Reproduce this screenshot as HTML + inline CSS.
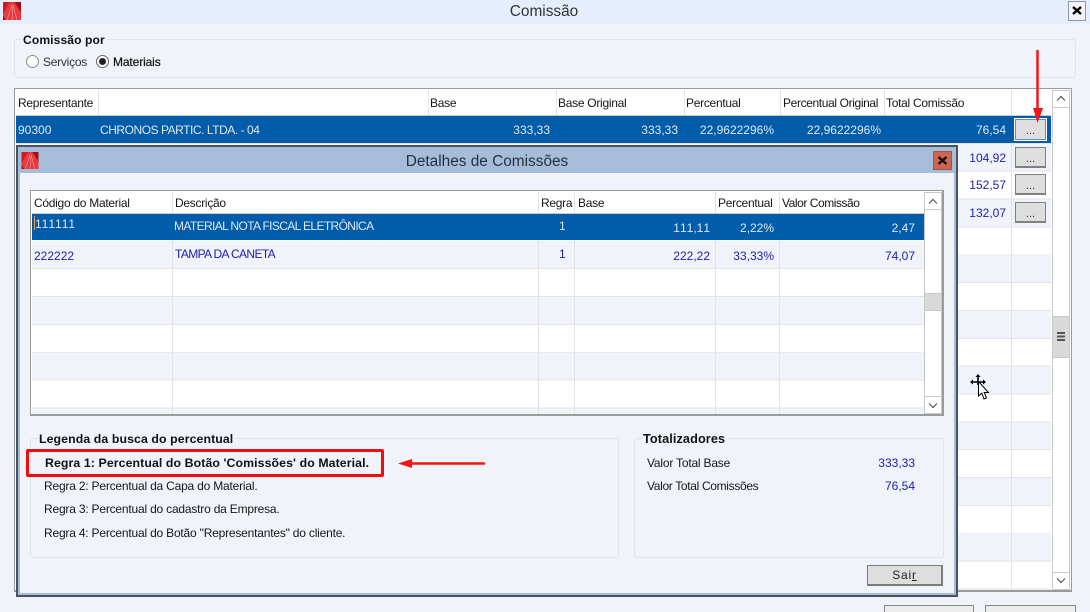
<!DOCTYPE html>
<html><head><meta charset="utf-8"><title>Comissão</title>
<style>
html,body{margin:0;padding:0;width:1090px;height:612px;overflow:hidden;background:#f1f3fa}
body{position:relative;font:12px/14px "Liberation Sans",sans-serif;letter-spacing:-.28px;color:#161616}
div,span{position:absolute;box-sizing:border-box;white-space:nowrap}
.r{text-align:right}
.n{font-size:12px;font-kerning:none;letter-spacing:0}
.c{letter-spacing:-.62px}
.v{width:1px;background:#e3e3e6}
.h{height:1px;background:#e3e3e6}
.blue{color:#2020b0}
.w{color:#dfe8f4}
.btn{width:31px;height:21px;background:#dedede;border:1px solid #808080;border-width:1px 1px 2px 1px;text-align:center;line-height:23px;font-size:11px;letter-spacing:0;color:#333}
.sb{background:#fff;border:1px solid #c8c8c8}
.leg{font-weight:bold;font-size:12.3px;color:#111;letter-spacing:.1px}
.l{letter-spacing:-.2px}
</style></head><body>
<div style="left:0;top:0;width:1090px;height:24px;background:#e6eefd"></div>
<svg style="position:absolute;left:3px;top:2px" width="18" height="18" viewBox="0 0 18 18"><rect width="18" height="18" fill="#d01a20"/><path d="M0 18V12L7 0h4l7 11v7z" fill="#e63a40"/><path d="M4 18L9 3M9 18L10 4M14 18L10 3" stroke="#f29a9a" stroke-width=".6" fill="none"/><path d="M0 18V14L3 18zM12 0h6v9z" fill="#9a0f14"/></svg>
<div style="left:0;width:1090px;top:3px;text-align:center;font-size:15.400px;letter-spacing:0;line-height:18px;color:#333;padding-right:2px">Comissão</div>
<div style="left:1068px;top:1px;width:18px;height:20px;background:#f2f4fa;border:1px solid #8d97a8"></div>
<svg style="position:absolute;left:1072px;top:6px" width="10" height="9"><path d="M1 1L9 8M9 1L1 8" stroke="#000" stroke-width="2.400"/></svg>

<div style="left:14px;top:39px;width:1062px;height:39px;border:1px solid #dfe3ea;border-radius:3px"></div>
<div style="left:23px;top:33px;background:#f1f3fa;font-weight:bold;font-size:12.100px;padding:0 2px 0 0;color:#111;letter-spacing:.1px">Comissão por</div>
<div style="left:26px;top:55px;width:13px;height:13px;border-radius:50%;border:1px solid #8a8a8a;background:#fff"></div>
<div style="left:43px;top:55px;color:#333;letter-spacing:-.25px">Serviços</div>
<div style="left:96px;top:55px;width:13px;height:13px;border-radius:50%;border:1px solid #666;background:#fff"></div>
<div style="left:99px;top:58px;width:7px;height:7px;border-radius:50%;background:#222"></div>
<div style="left:113px;top:55px;color:#111;letter-spacing:-.12px;-webkit-text-stroke:.2px #111">Materiais</div>

<!-- outer grid -->
<div style="left:14px;top:88px;width:1058px;height:504px;border:2px solid #9a9a9a;border-width:1px 1px 2px 1px;background:#fff"></div>
<div style="left:16px;top:116px;width:1035px;height:474px;background:repeating-linear-gradient(#fff 0,#fff 26.85px,#e3e3e6 26.85px,#e3e3e6 27.85px,#f1f3fa 27.85px,#f1f3fa 54.7px,#e3e3e6 54.7px,#e3e3e6 55.7px)"></div>
<div class="v" style="left:98px;top:90px;height:500px"></div>
<div class="v" style="left:428px;top:90px;height:500px"></div>
<div class="v" style="left:556px;top:90px;height:500px"></div>
<div class="v" style="left:684px;top:90px;height:500px"></div>
<div class="v" style="left:780px;top:90px;height:500px"></div>
<div class="v" style="left:884px;top:90px;height:500px"></div>
<div class="v" style="left:1011px;top:90px;height:500px"></div>
<div class="h" style="left:16px;top:115px;width:1035px;background:#ccc"></div>
<div style="left:18px;top:96px">Representante</div>
<div style="left:430px;top:96px">Base</div>
<div style="left:558px;top:96px">Base Original</div>
<div style="left:686px;top:96px">Percentual</div>
<div style="left:783px;top:96px;letter-spacing:-.37px">Percentual Original</div>
<div style="left:886px;top:96px">Total Comissão</div>

<div style="left:16px;top:116px;width:1035px;height:27px;background:#015ca9"></div>
<div class="w n" style="left:18px;top:123px">90300</div>
<div class="w" style="left:100px;top:123px;letter-spacing:-.46px">CHRONOS PARTIC. LTDA. - 04</div>
<div class="w r n" style="left:428px;width:122px;top:123px">333,33</div>
<div class="w r n" style="left:556px;width:122px;top:123px">333,33</div>
<div class="w r n" style="left:684px;width:90px;top:123px">22,9622296%</div>
<div class="w r n" style="left:780px;width:101px;top:123px">22,9622296%</div>
<div class="w r n" style="left:884px;width:122px;top:123px">76,54</div>
<div class="btn" style="left:1014px;top:118px;width:33px;height:23px;border:1px solid #fff;outline:1px solid #5f8fbc;outline-offset:-2px;line-height:25px">...</div>
<div class="blue r n" style="left:884px;width:122px;top:151px">104,92</div>
<div class="btn" style="left:1015px;top:147px">...</div>
<div class="blue r n" style="left:884px;width:122px;top:178px">152,57</div>
<div class="btn" style="left:1015px;top:174px">...</div>
<div class="blue r n" style="left:884px;width:122px;top:206px">132,07</div>
<div class="btn" style="left:1015px;top:202px">...</div>

<div class="sb" style="left:1052px;top:90px;width:18px;height:500px"></div>
<div class="sb" style="left:1052px;top:90px;width:18px;height:18px"></div>
<svg style="position:absolute;left:1056px;top:95px" width="10" height="7"><path d="M1 5.500L5 1.500L9 5.500" stroke="#555" fill="none" stroke-width="1.200"/></svg>
<div style="left:1052px;top:316px;width:18px;height:42px;background:#d9d9d9;border:1px solid #c8c8c8"></div>
<div style="left:1057px;top:332px;width:8px;height:9px;background:repeating-linear-gradient(#555 0,#555 2px,#d9d9d9 2px,#d9d9d9 3.500px)"></div>
<div class="sb" style="left:1052px;top:572px;width:18px;height:18px"></div>
<svg style="position:absolute;left:1056px;top:577px" width="10" height="7"><path d="M1 1.500L5 5.500L9 1.500" stroke="#555" fill="none" stroke-width="1.200"/></svg>

<svg style="position:absolute;left:968px;top:373px" width="24" height="30" viewBox="0 0 24 30"><path d="M10 1L7.500 4H9.200V8.200H5V6.500L2 9L5 11.500V9.800H9.200V12H10.800V9.800H15V11.500L18 9L15 6.500V8.200H10.800V4H12.500Z" fill="#000"/><path d="M10.500 8.500V23L13.800 20.200L16 26L18.500 25L16.200 19.500H20.500Z" fill="#fff" stroke="#000" stroke-width="1"/></svg>

<div style="left:884px;top:605px;width:90px;height:7px;background:#ececec;border:1px solid #888;border-bottom:0"></div>
<div style="left:985px;top:605px;width:91px;height:7px;background:#ececec;border:1px solid #888;border-bottom:0"></div>

<!-- arrow top -->
<svg style="position:absolute;left:1025px;top:48px" width="24" height="76"><path d="M12.500 3V60" stroke="#f21416" stroke-width="2.500" stroke-linecap="round"/><path d="M8 60H18L12.500 75Z" fill="#f21416"/></svg>

<!-- dialog -->
<div style="left:16px;top:145px;width:942px;height:452px;border:2px solid #4a525e;background:#f1f3fa"></div>
<div style="left:18px;top:147px;width:938px;height:26px;background:#a5bdd9"></div>
<div style="left:18px;top:147px;width:2px;height:448px;background:#a5bdd9"></div>
<div style="left:954px;top:147px;width:2px;height:448px;background:#a5bdd9"></div>
<div style="left:18px;top:593px;width:938px;height:2px;background:#a5bdd9"></div>
<svg style="position:absolute;left:21px;top:152px" width="18" height="17" viewBox="0 0 18 18"><rect width="18" height="18" fill="#d01a20"/><path d="M0 18V12L7 0h4l7 11v7z" fill="#e63a40"/><path d="M4 18L9 3M9 18L10 4M14 18L10 3" stroke="#f29a9a" stroke-width=".6" fill="none"/><path d="M0 18V14L3 18zM12 0h6v9z" fill="#9a0f14"/></svg>
<div style="left:18px;width:938px;top:153px;text-align:center;font-size:15.400px;letter-spacing:0;line-height:18px;color:#24303f">Detalhes de Comissões</div>
<div style="left:933px;top:151px;width:19px;height:19px;background:#cd6552;border:1px solid #a4553f"></div>
<svg style="position:absolute;left:937px;top:156px" width="11" height="9"><path d="M1.500 1L9.500 8M9.500 1L1.500 8" stroke="#111" stroke-width="2.400"/></svg>

<!-- inner grid -->
<div style="left:30px;top:190px;width:914px;height:226px;border:1px solid #9a9a9a;border-width:1px 2px 2px 1px;background:#fff"></div>
<div style="left:32px;top:241px;width:892px;height:173px;background:repeating-linear-gradient(#f1f3fa 0,#f1f3fa 27px,#e3e3e6 27px,#e3e3e6 28px,#fff 28px,#fff 55px,#e3e3e6 55px,#e3e3e6 55.800px)"></div>
<div class="v" style="left:172px;top:192px;height:222px"></div>
<div class="v" style="left:538px;top:192px;height:222px"></div>
<div class="v" style="left:574px;top:192px;height:222px"></div>
<div class="v" style="left:715px;top:192px;height:222px"></div>
<div class="v" style="left:779px;top:192px;height:222px"></div>
<div class="h" style="left:32px;top:213px;width:892px;background:#ccc"></div>
<div style="left:34px;top:196px">Código do Material</div>
<div style="left:175px;top:196px">Descrição</div>
<div style="left:541px;top:196px">Regra</div>
<div style="left:578px;top:196px">Base</div>
<div style="left:718px;top:196px">Percentual</div>
<div style="left:782px;top:196px;letter-spacing:-.45px">Valor Comissão</div>

<div style="left:32px;top:214px;width:892px;height:26px;background:#015ca9"></div>
<div style="left:34px;top:216px;width:1px;height:14px;background:#e8a050"></div>
<div class="w n" style="left:35px;top:217px">111111</div>
<div class="w c" style="left:174px;top:219px">MATERIAL NOTA FISCAL ELETRÔNICA</div>
<div class="w n" style="left:559px;top:219px">1</div>
<div class="w r n" style="left:575px;width:135px;top:221px">111,11</div>
<div class="w r n" style="left:716px;width:58px;top:221px">2,22%</div>
<div class="w r n" style="left:780px;width:135px;top:221px">2,47</div>
<div class="blue n" style="left:34px;top:249px">222222</div>
<div class="blue c" style="left:175px;top:247px">TAMPA DA CANETA</div>
<div class="blue n" style="left:559px;top:247px">1</div>
<div class="blue r n" style="left:575px;width:135px;top:249px">222,22</div>
<div class="blue r n" style="left:716px;width:58px;top:249px">33,33%</div>
<div class="blue r n" style="left:780px;width:135px;top:249px">74,07</div>

<div class="sb" style="left:924px;top:192px;width:18px;height:222px"></div>
<div class="sb" style="left:924px;top:192px;width:18px;height:18px"></div>
<svg style="position:absolute;left:928px;top:198px" width="10" height="7"><path d="M1 5.500L5 1.500L9 5.500" stroke="#555" fill="none" stroke-width="1.200"/></svg>
<div style="left:924px;top:293px;width:18px;height:18px;background:#d9d9d9;border:1px solid #c8c8c8"></div>
<div class="sb" style="left:924px;top:396px;width:18px;height:18px"></div>
<svg style="position:absolute;left:928px;top:402px" width="10" height="7"><path d="M1 1.500L5 5.500L9 1.500" stroke="#555" fill="none" stroke-width="1.200"/></svg>

<!-- legend -->
<div style="left:30px;top:438px;width:589px;height:120px;border:1px solid #dfe3ea;border-radius:3px"></div>
<div class="leg" style="left:39px;top:432px;background:#f1f3fa;padding-right:3px">Legenda da busca do percentual</div>
<div class="leg" style="left:45px;top:456px">Regra 1: Percentual do Botão 'Comissões' do Material.</div>
<div style="left:26px;top:449px;width:358px;height:28px;border:3px solid #f00d10;border-radius:2px"></div>
<div class="l" style="left:44px;top:479px">Regra 2: Percentual da Capa do Material.</div>
<div class="l" style="left:44px;top:502px">Regra 3: Percentual do cadastro da Empresa.</div>
<div class="l" style="left:44px;top:526px">Regra 4: Percentual do Botão "Representantes" do cliente.</div>
<svg style="position:absolute;left:396px;top:456px" width="92" height="16"><path d="M14 7.500H88" stroke="#f21416" stroke-width="2.500" stroke-linecap="round"/><path d="M2 7.500L16 3V12Z" fill="#f21416"/></svg>

<div style="left:634px;top:438px;width:310px;height:120px;border:1px solid #dfe3ea;border-radius:3px"></div>
<div class="leg" style="left:643px;top:432px;background:#f1f3fa;padding-right:3px;font-size:12.700px">Totalizadores</div>
<div class="l" style="left:647px;top:456px">Valor Total Base</div>
<div style="left:647px;top:479px;letter-spacing:-.33px">Valor Total Comissões</div>
<div class="blue r n" style="left:815px;width:100px;top:456px">333,33</div>
<div class="blue r n" style="left:815px;width:100px;top:479px">76,54</div>
<div class="btn" style="left:867px;top:565px;width:76px;height:21px;border:1px solid #7c7c7c;border-width:1px 2px 2px 1px;font-size:12px;color:#222;line-height:19px;letter-spacing:.8px">Sai<u>r</u></div>
</body></html>
